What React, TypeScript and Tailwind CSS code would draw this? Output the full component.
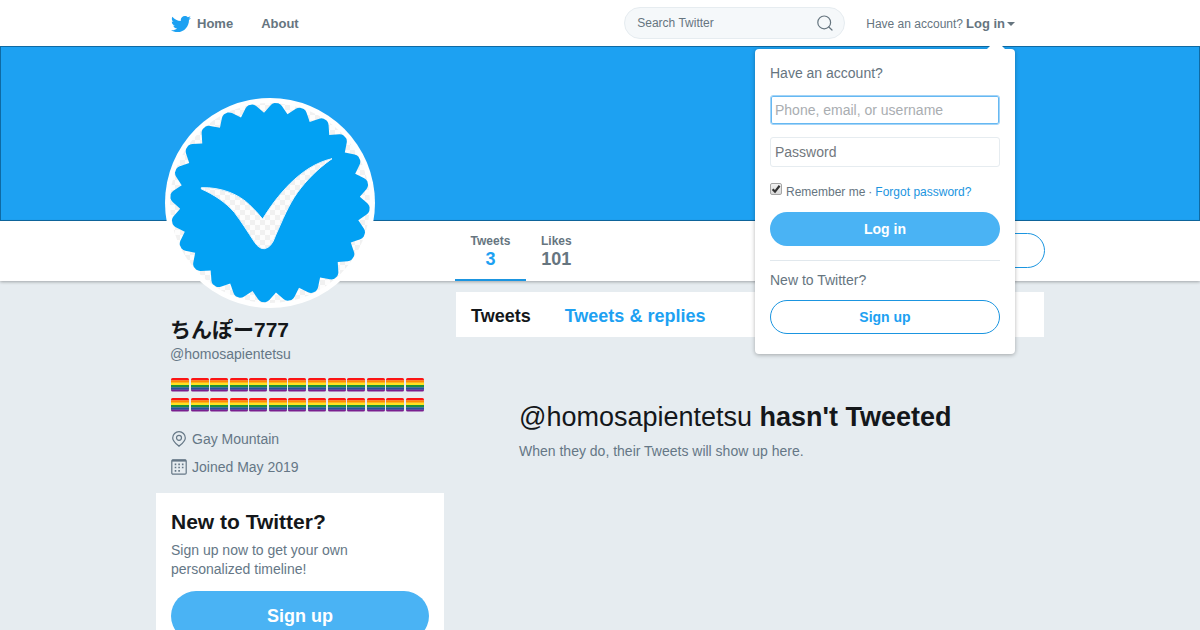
import React from "react";
import { FaTwitter } from "react-icons/fa";

const STRIPES = ["#fa1414", "#ff8a00", "#ffe21f", "#1d8f3c", "#27509c", "#7a1f8f"];

function RainbowFlag() {
  return (
    <svg viewBox="0 0 18 14" className="h-[14px] w-[18px] shrink-0" role="img" aria-label="Rainbow flag">
      <clipPath id="flag-shape">
        <rect x="0" y="0" width="18" height="13.6" rx="1.6" />
      </clipPath>
      <g clipPath="url(#flag-shape)">
        {STRIPES.map((color, i) => (
          <rect key={color} x="0" y={(i * 14) / 6} width="18" height="2.5" fill={color} />
        ))}
      </g>
    </svg>
  );
}

function FlagRow() {
  return (
    <div className="flex h-5 w-[253px] items-center justify-between">
      {Array.from({ length: 13 }, (_, i) => (
        <RainbowFlag key={i} />
      ))}
    </div>
  );
}

function polar(radius: number, degrees: number) {
  const a = (degrees * Math.PI) / 180;
  return `${(330 + radius * Math.sin(a)).toFixed(1)} ${(338 - radius * Math.cos(a)).toFixed(1)}`;
}

function sealPath() {
  const parts: string[] = [];
  for (let i = 0; i < 24; i++) {
    const valley = -3.8 + i * 15;
    parts.push(`${i === 0 ? "M" : "L"}${polar(270, valley)}`);
    parts.push(`L${polar(292, valley + 4.2)}`);
    parts.push(`Q${polar(297, valley + 5)} ${polar(299, valley + 6.4)}`);
    parts.push(`L${polar(299, valley + 8.6)}`);
    parts.push(`Q${polar(297, valley + 10)} ${polar(292, valley + 10.8)}`);
  }
  return parts.join(" ") + "Z";
}

function Avatar() {
  return (
    <svg viewBox="15 24 630 630" className="size-[210px]" role="img" aria-label="Profile picture">
      <defs>
        <pattern id="checker" width="30" height="30" patternUnits="userSpaceOnUse">
          <rect width="30" height="30" fill="#fdfdfd" />
          <rect width="15" height="15" fill="#f1f1f1" />
          <rect x="15" y="15" width="15" height="15" fill="#f1f1f1" />
        </pattern>
      </defs>
      <circle cx="330" cy="339" r="315" fill="#fff" />
      <circle cx="330" cy="339" r="300" fill="url(#checker)" />
      <path d={sealPath()} fill="#02a1f3" />
      <path
        d="M124 293C185 291 238 314 269 345Q289 364 308 387C331 350 356 315 391 280C427 245 466 218 516 206C472 237 440 270 412 308C386 344 368 389 346 438Q335 472 314 476Q298 478 284 457C262 424 246 397 223 367C196 336 161 313 124 297Z"
        fill="url(#checker)"
        stroke="#e8f5fd"
        strokeWidth="3"
        strokeLinejoin="round"
      />
    </svg>
  );
}

function SearchIcon() {
  return (
    <svg viewBox="0 0 16 16" className="size-4" fill="none" stroke="#66757f" strokeWidth="1.2" strokeLinecap="round">
      <circle cx="7.2" cy="7.4" r="6.4" />
      <path d="M11.8 12 L15 15" />
    </svg>
  );
}

function PinIcon() {
  return (
    <svg viewBox="0 0 16 16" className="size-4" fill="none" stroke="#657786" strokeWidth="1.2">
      <path d="M8 15.2C6.2 13.6 1.7 10.6 1.7 7a6.3 6.3 0 0 1 12.6 0C14.3 10.6 9.8 13.6 8 15.2Z" />
      <circle cx="8" cy="6.8" r="2.5" />
    </svg>
  );
}

function CalendarIcon() {
  return (
    <svg viewBox="0 0 16 16" className="size-4" fill="none" stroke="#657786">
      <rect x="0.8" y="0.8" width="14.4" height="14.4" rx="1.2" strokeWidth="1.2" />
      <path d="M1 1.6H15" strokeWidth="2" />
      <path
        d="M7.3 5.4h1.6M10.9 5.4h1.6M3.7 5.4h1.6M3.7 8.5h1.6M7.3 8.5h1.6M10.9 8.5h1.6M3.7 11.9h1.6M7.3 11.9h1.6"
        strokeWidth="1.6"
      />
    </svg>
  );
}

function LoginMenu() {
  return (
    <div className="absolute top-full right-0 z-20 mt-[3px] w-[260px] rounded-[4px] bg-white px-[15px] pt-[14px] pb-5 text-sm font-normal text-[#66757f] shadow-[0_1px_4px_rgba(0,0,0,0.3)]">
      <svg viewBox="0 0 20 10" className="absolute -top-[9px] right-[9px] h-[10px] w-5">
        <path d="M0 10L9 1Q10 0 11 1L20 10Z" fill="#fff" />
      </svg>
      <form onSubmit={(e) => e.preventDefault()}>
        <p className="leading-5">Have an account?</p>
        <input
          type="text"
          aria-label="Phone, email, or username"
          placeholder="Phone, email, or username"
          className="mt-3 block h-[30px] w-full rounded-[3px] border border-[#a3d4f7] px-1 text-sm shadow-[inset_0_0_0_1px_#66b8f2] outline-none placeholder:text-[#a9adb1]"
        />
        <input
          type="password"
          aria-label="Password"
          placeholder="Password"
          className="mt-3 block h-[30px] w-full rounded-[3px] border border-[#e6ecf0] px-1 text-sm outline-none placeholder:text-[#72787e]"
        />
        <div className="mt-4 flex h-4 items-center text-xs">
          <label className="flex items-center gap-1">
            <span className="relative mb-1 block size-3">
              <input
                type="checkbox"
                defaultChecked
                className="block size-3 appearance-none rounded-[2px] border border-[#a5a5a5] bg-linear-to-b from-[#f2f2f2] to-[#d9d9d9]"
              />
              <svg viewBox="0 0 12 12" className="pointer-events-none absolute inset-0 size-3">
                <path d="M2.6 6.2L5 8.6L9.6 2.8" fill="none" stroke="#333" strokeWidth="2.2" />
              </svg>
            </span>
            <span className="pt-[2px]">Remember me</span>
          </label>
          <span className="px-[3px] pt-[2px]">·</span>
          <a href="#forgot" className="pt-[2px] text-[#1b95e0]">Forgot password?</a>
        </div>
        <button type="submit" className="mt-[13px] block h-[34px] w-full rounded-full bg-[#4ab3f4] font-bold text-white">
          Log in
        </button>
      </form>
      <div className="mt-[14px] border-t border-[#e1e8ed] pt-[9px]">
        <p className="leading-5">New to Twitter?</p>
        <button type="button" className="mt-[10px] block h-[34px] w-full rounded-full border border-[#1b95e0] font-bold text-[#1da1f2]">
          Sign up
        </button>
      </div>
    </div>
  );
}

function TopBar() {
  return (
    <header className="bg-white">
      <div className="mx-auto flex h-[46px] max-w-[890px] items-center justify-between px-4 text-[13px] font-bold text-[#66757f]">
        <nav className="flex items-center gap-7 pt-[2px]">
          <a href="#home" className="flex items-center gap-[6px]">
            <FaTwitter className="size-5 text-[#1da1f2]" />
            Home
          </a>
          <a href="#about">About</a>
        </nav>
        <div className="mr-[14px] flex h-full items-center gap-[21px]">
          <form role="search" onSubmit={(e) => e.preventDefault()} className="flex h-8 w-[221px] items-center rounded-full border border-[#e6ecf0] bg-[#f5f8fa] pr-[11px] pl-3">
            <input
              type="search"
              aria-label="Search Twitter"
              placeholder="Search Twitter"
              className="min-w-0 flex-1 bg-transparent text-xs font-normal outline-none placeholder:text-[#66757f]"
            />
            <button type="submit" aria-label="Search">
              <SearchIcon />
            </button>
          </form>
          <div className="relative flex h-full items-center">
            <button type="button" className="flex items-center gap-[2px] pt-[2px] text-xs font-normal">
              <span className="pr-px">Have an account?</span>
              <span className="overflow-hidden text-[13px] leading-[14px] font-bold">Log in</span>
              <svg viewBox="0 0 8 4" className="h-1 w-2">
                <path d="M0 0H8L4 4Z" fill="#66757f" />
              </svg>
            </button>
            <LoginMenu />
          </div>
        </div>
      </div>
    </header>
  );
}

function Stat({ label, value, active }: { label: string; value: string; active?: boolean }) {
  return (
    <a
      href={"#" + label.toLowerCase()}
      className={
        active
          ? "flex min-w-[71px] flex-col items-center border-b-2 border-[#1b95e0] px-[15px] pt-3 font-bold text-[#66757f]"
          : "flex flex-col items-center border-b-2 border-transparent px-[15px] pt-3 font-bold text-[#66757f]"
      }
    >
      <span className="text-xs leading-4">{label}</span>
      <span className={active ? "text-lg leading-5 text-[#1da1f2]" : "text-lg leading-5"}>{value}</span>
    </a>
  );
}

export default function App() {
  return (
    <div className="h-screen overflow-hidden bg-[#e6ecf0] font-['Liberation_Sans','Noto_Sans_CJK_JP',sans-serif] text-[#14171a]">
      <TopBar />
      <div className="h-[175px] border border-[#0f6aa3] bg-[#1da1f2]" />
      <div className="relative bg-white shadow-[0_1px_3px_rgba(0,0,0,0.3)]">
        <div className="relative mx-auto flex h-[60px] max-w-[890px] pl-[300px]">
          <div className="absolute bottom-[-27px] left-[10px]">
            <Avatar />
          </div>
          <Stat label="Tweets" value="3" active />
          <Stat label="Likes" value="101" />
          <button type="button" aria-label="Follow" className="mt-3 ml-auto h-[35px] w-[100px] rounded-full border border-[#1b95e0]" />
        </div>
      </div>
      <div className="mx-auto flex max-w-[890px] gap-3 px-px">
        <aside className="w-[288px] shrink-0 pt-9">
          <div className="px-[14px] text-sm text-[#657786]">
            <h1 className="mb-[2px] text-[21px] leading-[26px] font-bold text-[#14171a]">ちんぽー777</h1>
            <p className="leading-[18px]">@homosapientetsu</p>
            <div className="mt-3 ml-px">
              <FlagRow />
              <FlagRow />
            </div>
            <p className="mt-[14px] ml-px flex h-5 items-center gap-[5px]">
              <PinIcon />
              Gay Mountain
            </p>
            <p className="mt-2 ml-px flex h-5 items-center gap-[5px]">
              <CalendarIcon />
              Joined May 2019
            </p>
          </div>
          <section className="mt-4 bg-white px-[15px] pt-4 pb-4">
            <h2 className="text-[21px] leading-[26px] font-bold">New to Twitter?</h2>
            <p className="mt-[6px] text-sm leading-[19px] text-[#657786]">Sign up now to get your own personalized timeline!</p>
            <button type="button" className="mt-3 block h-[50px] w-full rounded-full bg-[#4ab3f4] text-lg font-bold text-white">
              Sign up
            </button>
          </section>
        </aside>
        <main className="min-w-0 flex-1 pt-[11px]">
          <nav className="flex h-[45px] items-center gap-[34px] bg-white px-[15px] pt-[2px] text-lg font-bold">
            <span>Tweets</span>
            <a href="#replies" className="text-[#1da1f2]">Tweets &amp; replies</a>
          </nav>
          <div className="px-[63px] pt-[62px]">
            <h2 className="text-[27px] leading-9">
              @homosapientetsu <span className="font-bold">hasn't Tweeted</span>
            </h2>
            <p className="mt-[6px] text-sm text-[#657786]">When they do, their Tweets will show up here.</p>
          </div>
        </main>
      </div>
    </div>
  );
}
